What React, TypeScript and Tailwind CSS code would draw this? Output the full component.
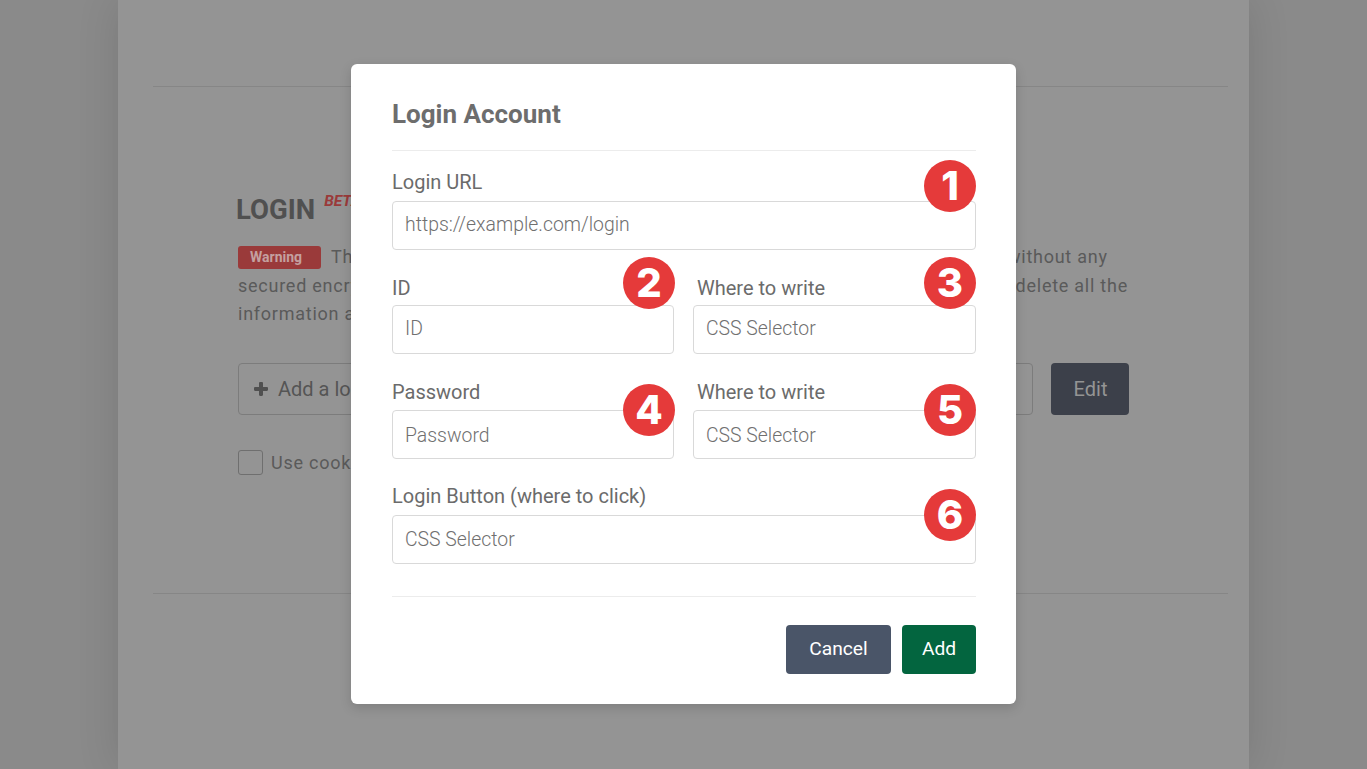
import React from "react";
import { ChevronDown } from "lucide-react";

const font = { fontFamily: "Roboto, 'Liberation Sans', sans-serif" };

function Badge({ n, className }: { n: string; className: string }) {
  return (
    <span
      className={
        "absolute flex h-[52px] w-[52px] items-center justify-center rounded-full bg-[#e53a3a] text-[40px] leading-none font-extrabold text-white " +
        className
      }
      style={{ fontFamily: "Inter, 'Noto Sans', sans-serif" }}
    >
      {n}
    </span>
  );
}

function Field({
  label,
  placeholder,
  n,
  inset,
  badgeClass,
  inputClass,
  labelClass,
  className,
}: {
  label: string;
  placeholder: string;
  n: string;
  inset?: boolean;
  badgeClass: string;
  inputClass: string;
  labelClass?: string;
  className?: string;
}) {
  return (
    <div className={"relative " + (className ?? "")}>
      <label
        className={
          "block h-[31px] w-fit text-[20px] leading-[25px] text-[#6b6b6b] " +
          (inset ? "pl-1 " : "") +
          (labelClass ?? "")
        }
      >
        {label}
      </label>
      <input
        readOnly
        placeholder={placeholder}
        className={
          "block h-[49px] w-full rounded border border-[#d9d9d9] bg-white pr-[12px] pl-[12px] text-[19.4px] font-light text-[#6b6b6b] outline-none placeholder:text-[#707070] " +
          inputClass
        }
      />
      <Badge n={n} className={badgeClass} />
    </div>
  );
}

export default function App() {
  return (
    <div className="relative h-[769px] overflow-hidden bg-[#8a8a8a]" style={font}>
      {/* page behind the dialog */}
      <div className="mx-auto h-full w-[1131px] bg-[#949494] pt-[86px] pr-[21px] pl-[35px] shadow-[0_0_40px_rgba(0,0,0,0.12)]">
        <div className="h-px bg-[#868686]" />
        <div className="h-[506px] pt-[105px] pr-[99px] pl-[85px]">
          <h2 className="-ml-[2px] flex items-start text-[27.5px] leading-[36px] font-bold text-[#505050]">
            LOGIN
            <span className="mt-[-2px] ml-[9px] text-[15.5px] leading-[22px] font-bold text-[#9a3a3a] italic">BETA</span>
          </h2>
          <div className="mt-[15px] text-[18px] leading-[28.5px] tracking-[0.75px] text-[#5a5a5a]">
            <span className="mr-[10px] inline-block h-[23px] w-[83px] rounded-[3px] bg-[#9a3a3a] pl-[12px] align-[1px] text-[14px] leading-[22px] font-bold tracking-normal text-[#c4a0a0]">
              Warning
            </span>
            This feature stores your own login information in plain text on our own server without any
            <br />
            secured encryption, so please use a test account only. If you ever stop using this service, delete all the
            <br />
            information and remove the account.
          </div>
          <div className="mt-[34px] flex gap-[18px]">
            <div className="flex h-[52px] flex-1 items-center justify-between rounded border border-[#7c7c7c] pr-[14px] pl-[14px] text-[20px] text-[#555555]">
              <span className="flex items-center gap-[9px]">
                <svg width="16" height="16" viewBox="0 0 16 16" fill="#505050">
                  <path d="M6 2.2C6 1.5 6.5 1 7.2 1h1.6c.7 0 1.2.5 1.2 1.2V6h3.8c.7 0 1.2.5 1.2 1.2v1.6c0 .7-.5 1.2-1.2 1.2H10v3.8c0 .7-.5 1.2-1.2 1.2H7.2C6.5 15 6 14.5 6 13.8V10H2.2C1.500 10 1 9.500 1 8.800V7.200C1 6.500 1.500 6 2.200 6H6V2.200Z" />
                </svg>
                Add a login account
              </span>
              <ChevronDown size={12} strokeWidth={2} />
            </div>
            <button className="h-[52px] w-[78px] rounded bg-[#3c404a] pl-px text-[20px] text-[#949494]">Edit</button>
          </div>
          <div className="mt-[34px] flex items-center gap-[8px] text-[18px] tracking-[0.75px] text-[#5a5a5a]">
            <span className="h-[25px] w-[25px] rounded-[3px] border border-[#6f6f6f]" />
            Use cookies to keep the login session
          </div>
        </div>
        <div className="h-px bg-[#868686]" />
      </div>

      {/* dialog */}
      <div className="absolute inset-0 flex items-start justify-center pt-[64px]">
        <div className="h-[640px] w-[665px] rounded-md bg-white pr-[40px] pl-[41px] shadow-[0_4px_12px_rgba(0,0,0,0.15)]">
          <h3 className="flex h-[86px] items-center pt-[14px] text-[26px] font-bold text-[#6d6d6d]">Login Account</h3>
          <div className="h-px bg-[#ececec]" />
          <div className="flex flex-col pt-[19px]">
            <Field
              label="Login URL"
              placeholder="https://example.com/login"
              n="1"
              inputClass="pb-[2px]"
              badgeClass="top-[-10px] right-0"
            />
            <div className="mt-[24px] flex gap-[19px]">
              <Field
                label="ID"
                placeholder="ID"
                n="2"
                className="w-[282px] flex-none"
                labelClass="pt-[2px]"
                inputClass="pb-[3px]"
                badgeClass="top-[-17px] right-[-1px]"
              />
              <Field
                label="Where to write"
                placeholder="CSS Selector"
                n="3"
                inset
                className="flex-1"
                labelClass="pt-[2px]"
                inputClass="pb-[3px]"
                badgeClass="top-[-17px] right-0"
              />
            </div>
            <div className="mt-[25px] flex gap-[19px]">
              <Field
                label="Password"
                placeholder="Password"
                n="4"
                className="w-[282px] flex-none"
                labelClass="pt-px"
                inputClass="pt-[2px]"
                badgeClass="top-[5px] right-[-1px]"
              />
              <Field
                label="Where to write"
                placeholder="CSS Selector"
                n="5"
                inset
                className="flex-1"
                labelClass="pt-px"
                inputClass="pt-[2px]"
                badgeClass="top-[5px] right-0"
              />
            </div>
            <Field
              label="Login Button (where to click)"
              placeholder="CSS Selector"
              n="6"
              className="mt-[25px]"
              inputClass=""
              badgeClass="top-[5px] right-0"
            />
          </div>
          <div className="mt-[32px] h-px bg-[#ececec]" />
          <div className="flex justify-end gap-[11px] pt-[28px]">
            <button className="h-[49px] w-[105px] rounded bg-[#4a5568] text-[19.2px] text-white">Cancel</button>
            <button className="h-[49px] w-[74px] rounded bg-[#03653f] text-[19.2px] text-white">Add</button>
          </div>
        </div>
      </div>
    </div>
  );
}
